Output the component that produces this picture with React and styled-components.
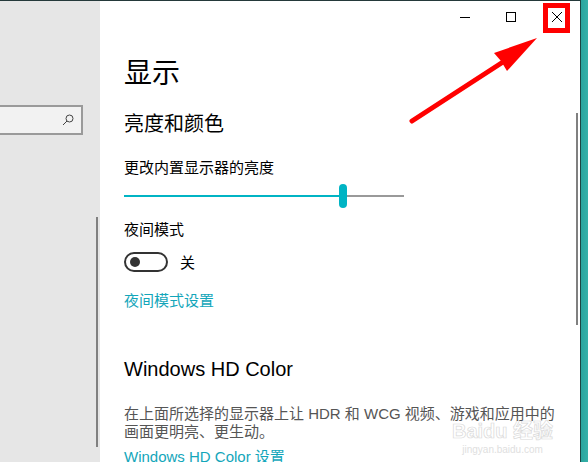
import React from 'react'
import styled, { createGlobalStyle } from 'styled-components'

const Global = createGlobalStyle`
  html, body { margin: 0; padding: 0; background: #fff; }
  body { font-family: "Liberation Sans", "Noto Sans CJK SC", sans-serif; }
`

const Screen = styled.div`
  width: 588px;
  height: 462px;
  display: flex;
  overflow: hidden;
  position: relative;
`

const Window = styled.div`
  flex: 1;
  display: flex;
  border-top: 1px solid #24393a;
`

const Edge = styled.div`
  width: 7px;
  border-left: 1px solid #1c4644;
  background: linear-gradient(to right, #2aa59e, #35b1a9);
`

const Sidebar = styled.div`
  width: 100px;
  background: #e6e6e6;
  position: relative;
  padding-top: 104px;
  box-sizing: border-box;
`

const SearchBox = styled.div`
  margin-left: -30px;
  width: 113px;
  height: 30px;
  box-sizing: border-box;
  border: 2px solid #9a9a9a;
  background: #f2f2f2;
  display: flex;
  align-items: center;
  justify-content: flex-end;
  padding-right: 7px;
`

const ScrollThumb = styled.div`
  position: absolute;
  width: 2px;
  background: #808080;
  left: ${p => p.$left}px;
  top: ${p => p.$top}px;
  height: ${p => p.$height}px;
`

const Main = styled.div`
  flex: 1;
  background: #fff;
  position: relative;
  display: flex;
  flex-direction: column;
`

const TitleBar = styled.div`
  height: 32px;
  display: flex;
  justify-content: flex-end;
`

const CaptionButton = styled.div`
  width: 46px;
  height: 32px;
  display: flex;
  align-items: center;
  justify-content: center;
`

const Content = styled.div`
  padding-left: 24px;
  display: flex;
  flex-direction: column;
  align-items: flex-start;
  color: #000;
`

const PageTitle = styled.div`
  font-size: 28px;
  line-height: 36px;
  margin-top: 23px;
`

const SectionTitle = styled.div`
  font-size: 20px;
  line-height: 28px;
  margin-top: ${p => p.$gap}px;
`

const Label = styled.div`
  font-size: 15px;
  line-height: 20px;
  margin-top: ${p => p.$gap}px;
`

const Slider = styled.div`
  margin-top: 6px;
  width: 280px;
  height: 24px;
  display: flex;
  align-items: center;
`

const Track = styled.div`
  height: 2px;
  background: ${p => p.$on ? '#00b4c4' : '#999'};
  width: ${p => p.$w ? `${p.$w}px` : 'auto'};
  flex: ${p => p.$w ? 'none' : 1};
`

const Thumb = styled.div`
  width: 8px;
  height: 24px;
  border-radius: 4px;
  background: #00b4c4;
`

const ToggleRow = styled.div`
  margin-top: 11px;
  display: flex;
  align-items: center;
  gap: 12px;
  font-size: 15px;
`

const Toggle = styled.div`
  width: 44px;
  height: 20px;
  box-sizing: border-box;
  border: 2px solid #333;
  border-radius: 10px;
  display: flex;
  align-items: center;
  padding-left: 4px;
`

const Knob = styled.div`
  width: 10px;
  height: 10px;
  border-radius: 50%;
  background: #333;
`

const Link = styled.div`
  font-size: 15px;
  line-height: 20px;
  color: #13a6ba;
  margin-top: ${p => p.$gap}px;
`

const Desc = styled.div`
  font-size: 15px;
  line-height: 18px;
  color: #555;
  margin-top: 22px;
  position: relative;
  z-index: 1;
`

const Annotation = styled.svg`
  position: absolute;
  left: 0;
  top: 0;
  pointer-events: none;
  z-index: 3;
`

const Watermark = styled.div`
  position: absolute;
  left: 352px;
  top: 419px;
  display: flex;
  flex-direction: column;
  align-items: center;
  white-space: nowrap;
  z-index: 0;
`

const MarkBig = styled.div`
  font-size: 20px;
  font-weight: bold;
  line-height: 22px;
  color: #fff;
  -webkit-text-stroke: 0.7px #d9d9d9;
`

const MarkSmall = styled.div`
  font-size: 10px;
  line-height: 12px;
  color: #e0e0e0;
  margin-top: 2px;
`

export default function App() {
  return (
    <Screen>
      <Global />
      <Window>
        <Sidebar>
          <SearchBox>
            <svg width="12" height="12" viewBox="0 0 12 12">
              <circle cx="7.5" cy="4.5" r="3.5" fill="none" stroke="#444" strokeWidth="1" />
              <line x1="5" y1="7" x2="1" y2="11" stroke="#444" strokeWidth="1" />
            </svg>
          </SearchBox>
          <ScrollThumb $left={96} $top={216} $height={230} />
        </Sidebar>
        <Main>
          <TitleBar>
            <CaptionButton>
              <svg width="10" height="10" viewBox="0 0 10 10">
                <line x1="0" y1="5.5" x2="10" y2="5.5" stroke="#000" strokeWidth="1" />
              </svg>
            </CaptionButton>
            <CaptionButton>
              <svg width="10" height="10" viewBox="0 0 10 10">
                <rect x="0.5" y="0.5" width="9" height="9" fill="none" stroke="#000" strokeWidth="1" />
              </svg>
            </CaptionButton>
            <CaptionButton>
              <svg width="10" height="10" viewBox="0 0 10 10">
                <path d="M0 0L10 10M10 0L0 10" stroke="#000" strokeWidth="1" />
              </svg>
            </CaptionButton>
          </TitleBar>
          <ScrollThumb $left={476} $top={112} $height={212} />

          <Content>
            <PageTitle>显示</PageTitle>
            <SectionTitle $gap={18}>亮度和颜色</SectionTitle>
            <Label $gap={20}>更改内置显示器的亮度</Label>
            <Slider>
              <Track $on $w={215} />
              <Thumb />
              <Track />
            </Slider>
            <Label $gap={12}>夜间模式</Label>
            <ToggleRow>
              <Toggle><Knob /></Toggle>
              <span>关</span>
            </ToggleRow>
            <Link $gap={19}>夜间模式设置</Link>
            <SectionTitle $gap={44}>Windows HD Color</SectionTitle>
            <Desc>
              在上面所选择的显示器上让 HDR 和 WCG 视频、游戏和应用中的<br />
              画面更明亮、更生动。
            </Desc>
            <Link $gap={6}>Windows HD Color 设置</Link>
          </Content>

          <Watermark>
            <MarkBig>Baidu 经验</MarkBig>
            <MarkSmall>jingyan.baidu.com</MarkSmall>
          </Watermark>
        </Main>
      </Window>
      <Edge />

      <Annotation width="588" height="462" viewBox="0 0 588 462">
        <rect x="545.5" y="5.5" width="22" height="25" fill="none" stroke="#ff0000" strokeWidth="5" />
        <line x1="412" y1="121" x2="503" y2="62" stroke="#ff0000" strokeWidth="5" strokeLinecap="round" />
        <polygon points="537,38 494,53 501,61 507,71" fill="#ff0000" />
      </Annotation>
    </Screen>
  )
}
